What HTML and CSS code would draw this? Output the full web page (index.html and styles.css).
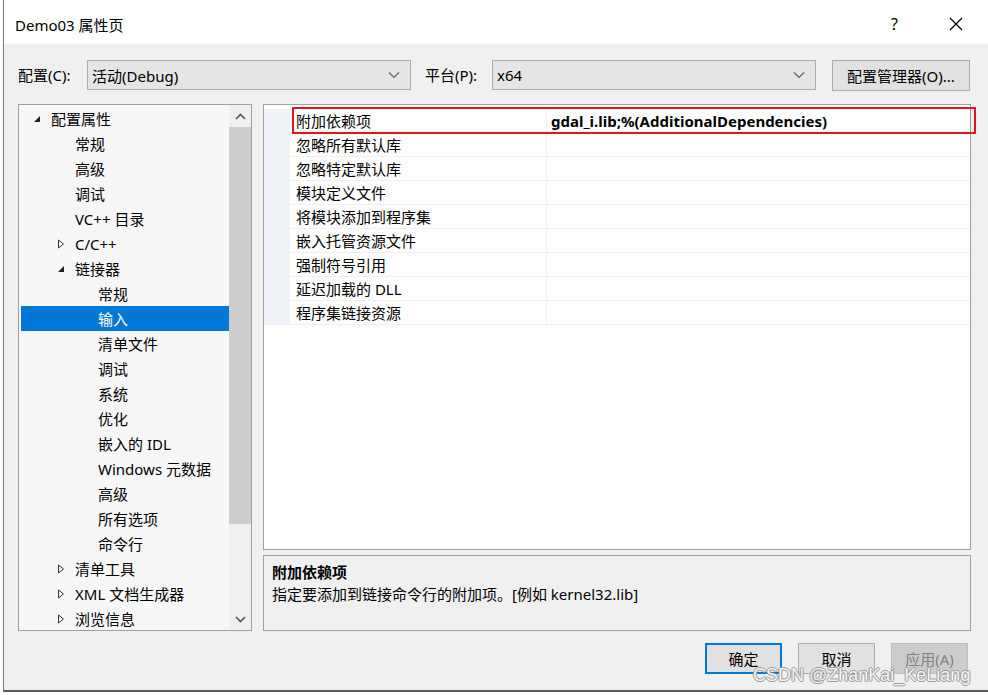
FILE: index.html
```html
<!DOCTYPE html>
<html lang="zh-CN">
<head>
<meta charset="utf-8">
<title>Demo03 属性页</title>
<link rel="stylesheet" href="styles.css">
</head>
<body>
<div class="window">
  <div class="titlebar">
    <span class="title">Demo03 属性页</span>
    <span class="help">?</span>
    <span class="close"><svg width="14" height="14" viewBox="0 0 14 14"><path d="M1 1L13 13M13 1L1 13" stroke="#000" stroke-width="1.2" fill="none"/></svg></span>
  </div>
  <div class="content">
    <div class="toolbar">
      <span class="lbl lbl-config">配置(C):</span>
      <div class="combo combo-config"><span>活动(Debug)</span><svg class="chev" width="12" height="8" viewBox="0 0 12 8"><path d="M1 1.5L6 6.5L11 1.5" stroke="#606060" stroke-width="1.1" fill="none"/></svg></div>
      <span class="lbl lbl-plat">平台(P):</span>
      <div class="combo combo-plat"><span>x64</span><svg class="chev" width="12" height="8" viewBox="0 0 12 8"><path d="M1 1.5L6 6.5L11 1.5" stroke="#606060" stroke-width="1.1" fill="none"/></svg></div>
      <div class="btn btn-mgr">配置管理器(O)...</div>
    </div>
    <div class="main">
      <div class="tree">
        <div class="tree-items">
          <div class="ti l0"><span class="tw"><svg width="8" height="8" viewBox="0 0 8 8"><path d="M7 1L7 7L1 7Z" fill="#222"/></svg></span>配置属性</div>
          <div class="ti l1"><span class="tw"></span>常规</div>
          <div class="ti l1"><span class="tw"></span>高级</div>
          <div class="ti l1"><span class="tw"></span>调试</div>
          <div class="ti l1"><span class="tw"></span>VC++ 目录</div>
          <div class="ti l1"><span class="tw"><svg width="8" height="10" viewBox="0 0 8 10"><path d="M1.5 1L6.5 5L1.5 9Z" stroke="#333" stroke-width="1" fill="none"/></svg></span>C/C++</div>
          <div class="ti l1"><span class="tw"><svg width="8" height="8" viewBox="0 0 8 8"><path d="M7 1L7 7L1 7Z" fill="#222"/></svg></span>链接器</div>
          <div class="ti l2"><span class="tw"></span>常规</div>
          <div class="ti l2 sel"><span class="tw"></span>输入</div>
          <div class="ti l2"><span class="tw"></span>清单文件</div>
          <div class="ti l2"><span class="tw"></span>调试</div>
          <div class="ti l2"><span class="tw"></span>系统</div>
          <div class="ti l2"><span class="tw"></span>优化</div>
          <div class="ti l2"><span class="tw"></span>嵌入的 IDL</div>
          <div class="ti l2"><span class="tw"></span>Windows 元数据</div>
          <div class="ti l2"><span class="tw"></span>高级</div>
          <div class="ti l2"><span class="tw"></span>所有选项</div>
          <div class="ti l2"><span class="tw"></span>命令行</div>
          <div class="ti l1"><span class="tw"><svg width="8" height="10" viewBox="0 0 8 10"><path d="M1.5 1L6.5 5L1.5 9Z" stroke="#333" stroke-width="1" fill="none"/></svg></span>清单工具</div>
          <div class="ti l1"><span class="tw"><svg width="8" height="10" viewBox="0 0 8 10"><path d="M1.5 1L6.5 5L1.5 9Z" stroke="#333" stroke-width="1" fill="none"/></svg></span>XML 文档生成器</div>
          <div class="ti l1"><span class="tw"><svg width="8" height="10" viewBox="0 0 8 10"><path d="M1.5 1L6.5 5L1.5 9Z" stroke="#333" stroke-width="1" fill="none"/></svg></span>浏览信息</div>
        </div>
        <div class="vscroll">
          <div class="sarrow"><svg width="11" height="7" viewBox="0 0 11 7"><path d="M1 6L5.5 1.5L10 6" stroke="#555" stroke-width="1.6" fill="none"/></svg></div>
          <div class="strack"><div class="sthumb"></div></div>
          <div class="sarrow"><svg width="11" height="7" viewBox="0 0 11 7"><path d="M1 1L5.5 5.5L10 1" stroke="#555" stroke-width="1.6" fill="none"/></svg></div>
        </div>
      </div>
      <div class="right">
        <div class="grid">
          <div class="rows">
            <div class="row first"><div class="margin"></div><div class="name">附加依赖项</div><div class="value bold">gdal_i.lib;%(AdditionalDependencies)</div></div>
            <div class="row"><div class="margin"></div><div class="name">忽略所有默认库</div><div class="value"></div></div>
            <div class="row"><div class="margin"></div><div class="name">忽略特定默认库</div><div class="value"></div></div>
            <div class="row"><div class="margin"></div><div class="name">模块定义文件</div><div class="value"></div></div>
            <div class="row"><div class="margin"></div><div class="name">将模块添加到程序集</div><div class="value"></div></div>
            <div class="row"><div class="margin"></div><div class="name">嵌入托管资源文件</div><div class="value"></div></div>
            <div class="row"><div class="margin"></div><div class="name">强制符号引用</div><div class="value"></div></div>
            <div class="row"><div class="margin"></div><div class="name">延迟加载的 DLL</div><div class="value"></div></div>
            <div class="row"><div class="margin"></div><div class="name">程序集链接资源</div><div class="value"></div></div>
          </div>
          <div class="redbox"></div>
        </div>
        <div class="desc">
          <div class="desc-title">附加依赖项</div>
          <div class="desc-text">指定要添加到链接命令行的附加项。[例如 kernel32.lib]</div>
        </div>
      </div>
    </div>
    <div class="buttons">
      <div class="btn btn-ok">确定</div>
      <div class="btn">取消</div>
      <div class="btn btn-dis">应用(A)</div>
    </div>
    <div class="watermark">CSDN @ZhanKai_KeLiang</div>
  </div>
</div>
</body>
</html>
```

FILE: styles.css
```css
* { box-sizing: border-box; }
html, body { margin: 0; padding: 0; background: #fff; }
body {
  font-family: "Noto Sans", "Noto Sans CJK SC", sans-serif;
  font-size: 15px;
  color: #000;
  width: 988px;
  height: 695px;
  overflow: hidden;
}
.window {
  margin-left: 3px;
  width: 985px;
  height: 692px;
  border-left: 1px solid #7a7a7a;
  border-bottom: 2px solid #5a5a5a;
  display: flex;
  flex-direction: column;
  background: #f0f0f0;
}
.titlebar {
  height: 44px;
  background: #fff;
  display: flex;
  align-items: center;
  padding-left: 11px;
  flex: none;
}
.title { flex: 1; font-size: 15px; padding-top: 4px; }
.help { width: 14px; margin-right: 44px; font-size: 16px; padding-top: 4px; }
.close { width: 14px; margin-right: 25px; display: flex; padding-top: 4px; }
.content { flex: 1; position: relative; padding: 16px 0 0 14px; }
.toolbar { display: flex; align-items: center; height: 30px; }
.lbl { line-height: 30px; }
.lbl-config { width: 69px; }
.lbl-plat { width: 67px; margin-left: 14px; }
.combo {
  height: 30px;
  background: #e5e5e5;
  border: 1px solid #adadad;
  display: flex;
  align-items: center;
  padding: 0 10px 0 4px;
  justify-content: space-between;
}
.combo-config { width: 324px; }
.combo-plat { width: 324px; }
.btn {
  height: 31px;
  width: 77px;
  background: #e1e1e1;
  border: 1px solid #adadad;
  display: flex;
  align-items: center;
  justify-content: center;
}
.btn-mgr { width: 138px; margin-left: 16px; height: 31px; }
.main { display: flex; margin-top: 14px; height: 527px; }
.tree {
  width: 234px;
  height: 527px;
  border: 1px solid #a0a0a0;
  background: #f7f7f7;
  display: flex;
}
.tree-items { flex: 1; padding: 1px 0 0 2px; overflow: hidden; }
.ti { height: 25px; display: flex; align-items: center; white-space: nowrap; }
.ti .tw { width: 18px; display: flex; align-items: center; justify-content: flex-start; }
.l0 { padding-left: 12px; }
.l1 { padding-left: 36px; }
.l2 { padding-left: 59px; }
.sel { background: #0078d7; color: #fff; }
.vscroll { width: 22px; display: flex; flex-direction: column; background: #f0f0f0; }
.sarrow { height: 22px; display: flex; align-items: center; justify-content: center; }
.strack { flex: 1; }
.sthumb { margin-top: 0; height: 397px; background: #cdcdcd; }
.right { margin-left: 11px; width: 708px; display: flex; flex-direction: column; }
.grid {
  position: relative;
  height: 446px;
  background: #fff;
  border: 1px solid #a0a0a0;
  padding-top: 4px;
}
.row { display: flex; height: 24px; }
.margin { width: 26px; background: #f0f4f9; }
.name {
  width: 257px;
  padding-left: 6px;
  border-bottom: 1px solid #f0f0f0;
  border-right: 1px solid #f0f0f0;
  line-height: 24px;
  white-space: nowrap;
}
.value {
  flex: 1;
  padding-left: 4px;
  border-bottom: 1px solid #f0f0f0;
  line-height: 24px;
}
.bold { font-weight: bold; }
.redbox {
  position: absolute;
  left: 28px;
  top: 2px;
  width: 684px;
  height: 27px;
  border: 2px solid #e8141b;
}
.desc {
  margin-top: 5px;
  height: 76px;
  border: 1px solid #a0a0a0;
  background: #f0f0f0;
  padding: 5px 8px;
  line-height: 22px;
}
.desc-title { font-weight: bold; }
.buttons {
  display: flex;
  justify-content: flex-end;
  gap: 16px;
  margin-top: 12px;
  padding-right: 20px;
}
.btn-ok { border: 2px solid #0078d7; }
.btn-dis { background: #cccccc; border-color: #bfbfbf; color: #838383; }
.watermark {
  position: absolute;
  left: 749px;
  top: 621px;
  white-space: nowrap;
  font-family: "Liberation Sans", Arial, sans-serif;
  font-size: 18px;
  color: #f4f4f4;
  text-shadow: -1px 0 #9a9a9a, 1px 0 #9a9a9a, 0 -1px #9a9a9a, 0 1px #9a9a9a;
}
```
